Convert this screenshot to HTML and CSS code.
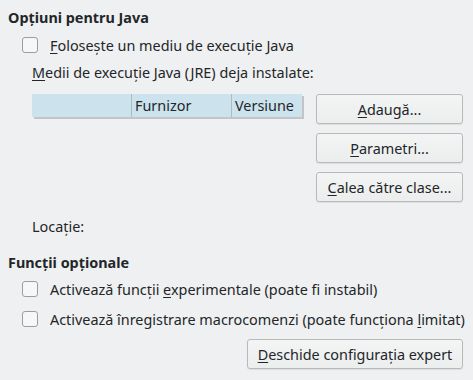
FILE: index.html
```html
<!DOCTYPE html>
<html lang="ro">
<head>
    <meta charset="UTF-8">
    <title>Opțiuni pentru Java</title>
    <link rel="stylesheet" href="styles.css">
</head>
<body>
    <div class="page">
        <h2 class="section-title">Opțiuni pentru Java</h2>

        <label class="check-row">
            <span class="checkbox"></span>
            <span><u>F</u>olosește un mediu de execuție Java</span>
        </label>

        <div class="indent">
            <div class="caption"><u>M</u>edii de execuție Java (JRE) deja instalate:</div>

            <div class="jre-area">
                <div class="jre-table">
                    <div class="jre-head">
                        <div class="col col-check"></div>
                        <div class="col col-vendor">Furnizor</div>
                        <div class="col col-version">Versiune</div>
                    </div>
                </div>
                <div class="btn-column">
                    <button class="btn"><u>A</u>daugă...</button>
                    <button class="btn"><u>P</u>arametri...</button>
                    <button class="btn"><u>C</u>alea către clase...</button>
                </div>
            </div>

            <div class="location">Locație:</div>
        </div>

        <h2 class="section-title second">Funcții opționale</h2>

        <label class="check-row">
            <span class="checkbox"></span>
            <span>Activează funcții <u>e</u>xperimentale (poate fi instabil)</span>
        </label>
        <label class="check-row">
            <span class="checkbox"></span>
            <span>Activează înregistrare macrocomenzi (poate funcționa <u>l</u>imitat)</span>
        </label>

        <div class="footer">
            <button class="btn btn-wide"><u>D</u>eschide configurația expert</button>
        </div>
    </div>
</body>
</html>
```

FILE: styles.css
```css
* {
    margin: 0;
    padding: 0;
    box-sizing: border-box;
}

body {
    font-family: 'Noto Sans', 'Open Sans', sans-serif;
    font-size: 14.4px;
    color: #232629;
    background: #eff0f1;
    width: 473px;
    height: 380px;
    overflow: hidden;
}

u {
    text-decoration-thickness: 1px;
    text-underline-offset: 2px;
}

.page {
    width: 463px;
    padding: 9px 0 0 8px;
    white-space: nowrap;
}

.section-title {
    font-size: 14.4px;
    font-weight: bold;
    line-height: 18px;
}

.section-title.second {
    margin-top: 18px;
}

.check-row {
    display: flex;
    align-items: center;
    height: 18px;
    margin: 9px 0 0 14px;
    gap: 12px;
}

.second + .check-row {
    margin-top: 8px;
}

.check-row + .check-row {
    margin-top: 12px;
}

.checkbox {
    width: 16px;
    height: 16px;
    border: 1px solid #9b9d9f;
    border-radius: 3px;
    background: #f7f7f7;
    flex-shrink: 0;
}

.indent {
    padding-left: 24px;
}

.caption {
    line-height: 18px;
    margin-top: 10px;
}

.jre-area {
    display: flex;
    align-items: flex-start;
    margin-top: 12px;
}

.jre-table {
    width: 270px;
}

.jre-head {
    display: flex;
    height: 23px;
    background: #cce3ee;
    box-shadow: 2px 2px 0 #c3c4c5;
}

.col {
    line-height: 23px;
    padding-left: 3px;
}

.col-check {
    width: 99px;
}

.col-vendor,
.col-version {
    border-left: 1px solid #a9bcc6;
}

.col-vendor {
    width: 100px;
}

.col-version {
    flex: 1;
}

.btn-column {
    display: flex;
    flex-direction: column;
    gap: 9px;
    margin-left: 14px;
}

.btn {
    font-family: inherit;
    font-size: 14.4px;
    color: #232629;
    width: 147px;
    height: 30px;
    background: linear-gradient(#f3f4f4, #eceded);
    border: 1px solid #b7b9bb;
    border-radius: 3px;
    box-shadow: 0 1px 1px rgba(0, 0, 0, 0.08);
}

.location {
    line-height: 18px;
    margin-top: 16px;
}

.footer {
    display: flex;
    justify-content: flex-end;
    margin-top: 11px;
}

.btn-wide {
    width: 216px;
}
```
